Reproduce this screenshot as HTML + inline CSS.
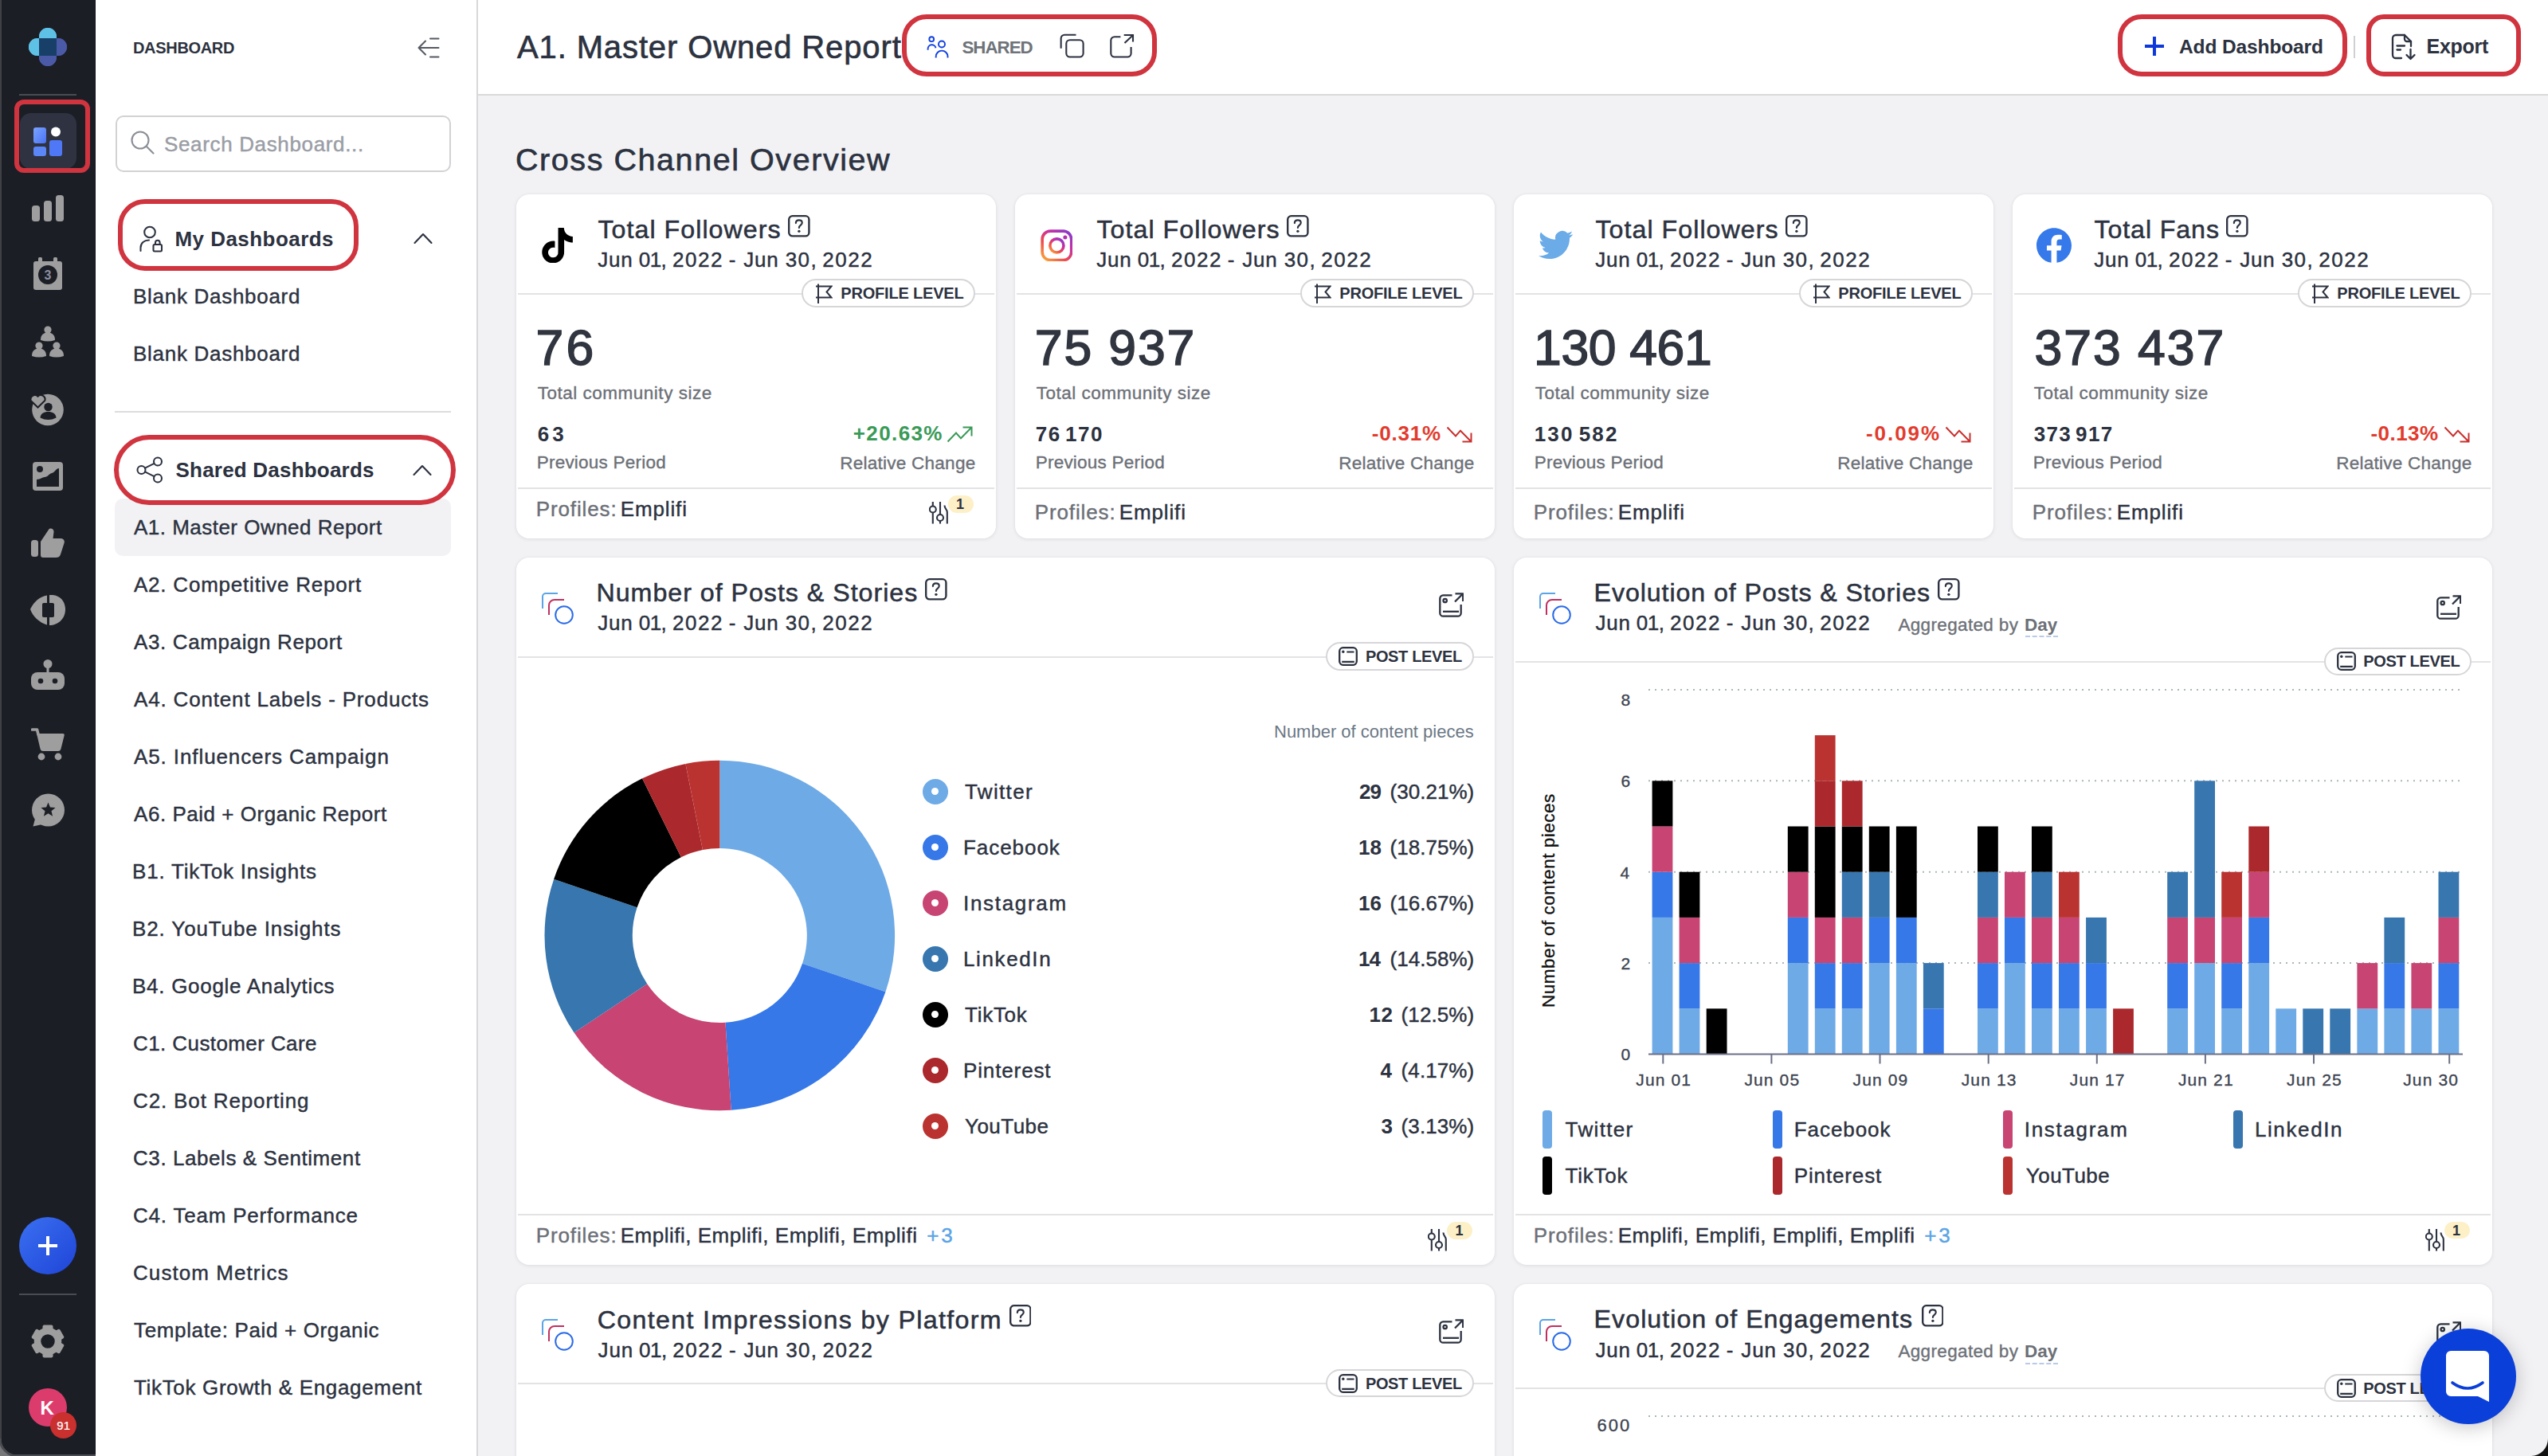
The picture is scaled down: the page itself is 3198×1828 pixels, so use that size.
<!DOCTYPE html>
<html lang="en"><head><meta charset="utf-8"><title>A1. Master Owned Report</title><style>
html,body{margin:0;padding:0}
body{width:3198px;height:1828px;overflow:hidden;background:#f2f2f5;position:relative;font-family:"Liberation Sans",sans-serif;}
.t{position:absolute;white-space:pre;line-height:1;}
.card{background:#fff;border-radius:16px;box-shadow:0 1px 5px rgba(30,35,50,.09),0 0 2px rgba(30,35,50,.05);}
.hl{position:absolute;height:2px;background:#e3e3e6;}
.pill{position:absolute;box-sizing:border-box;border:2px solid #d6d6d9;border-radius:20px;background:#fff;}
</style></head>
<body>
<div style="position:absolute;left:0.0px;top:0.0px;width:120.0px;height:1828.0px;background:#1c1e26;"></div>
<div style="position:absolute;left:0.0px;top:0.0px;width:2.0px;height:1828.0px;background:#3e4046;"></div>
<div style="position:absolute;left:119.0px;top:0.0px;width:1.0px;height:1828.0px;background:#11141c;"></div>
<svg style="position:absolute;left:36.0px;top:35.0px" width="48.0" height="48.0" viewBox="0 0 48 48" >
<circle cx="24" cy="11" r="11" fill="#5ec2e6"/>
<circle cx="11" cy="24" r="11" fill="#5ec2e6"/>
<circle cx="37" cy="24" r="11" fill="#4b5aa6"/>
<circle cx="24" cy="37" r="11" fill="#4b5aa6"/>
<rect x="13" y="13" width="22" height="22" fill="#173f68"/>
<path d="M13 13H35V11A11 11 0 0 0 13 11Z" fill="#5ec2e6"/>
<path d="M13 35H35V37A11 11 0 0 1 13 37Z" fill="#4b5aa6"/>
<path d="M13 13V35H11A11 11 0 0 1 11 13Z" fill="#5ec2e6"/>
<path d="M35 13V35H37A11 11 0 0 0 37 13Z" fill="#4b5aa6"/>
<rect x="13" y="13" width="22" height="22" fill="#173f68"/>
<path d="M13 35L20 28V35Z" fill="#4b5aa6" opacity=".0"/>
</svg>
<div style="position:absolute;left:24.0px;top:118.0px;width:72.0px;height:2.0px;background:#4a4c54;"></div>
<div style="position:absolute;left:25.0px;top:142.0px;width:71.0px;height:70.0px;background:#2f3341;border-radius:14px;"></div>
<svg style="position:absolute;left:40.0px;top:158.0px" width="40.0" height="40.0" viewBox="0 0 40 40" >
<defs><linearGradient id="gA" x1="0" y1="0" x2="1" y2="1"><stop offset="0" stop-color="#7aa5ff"/><stop offset="1" stop-color="#4a72f5"/></linearGradient></defs>
<rect x="2" y="2" width="16" height="20" rx="3" fill="url(#gA)"/>
<rect x="2" y="26" width="16" height="12" rx="3" fill="#5b86f8"/>
<rect x="22" y="18" width="16" height="20" rx="3" fill="#4f78f6"/>
<circle cx="30" cy="7.5" r="6" fill="#fff"/>
</svg>
<div style="position:absolute;left:18.0px;top:125.0px;width:95.0px;height:92.0px;border:6px solid #d0343f;border-radius:12px;box-sizing:border-box;"></div>
<svg style="position:absolute;left:40.0px;top:245.0px" width="40.0" height="34.0" viewBox="0 0 40 34" >
<rect x="0" y="13" width="10" height="20" rx="3.5" fill="#9e9e9e"/>
<rect x="15" y="7" width="10" height="26" rx="3.5" fill="#9e9e9e"/>
<rect x="30" y="0" width="10" height="33" rx="3.5" fill="#9e9e9e"/></svg>
<svg style="position:absolute;left:42.0px;top:323.0px" width="36.0" height="41.0" viewBox="0 0 36 41" >
<rect x="0" y="5" width="36" height="36" rx="3" fill="#9e9e9e"/>
<rect x="6" y="0" width="5" height="8" rx="1.5" fill="#9e9e9e"/><rect x="25" y="0" width="5" height="8" rx="1.5" fill="#9e9e9e"/>
<circle cx="18" cy="22" r="12" fill="#1c1e26"/>
<text x="18" y="28" font-family="Liberation Sans, sans-serif" font-weight="700" font-size="16" fill="#8d8fa0" text-anchor="middle">3</text></svg>
<svg style="position:absolute;left:38.0px;top:408.0px" width="44.0" height="44.0" viewBox="0 0 44 44" ><circle cx="22" cy="6" r="4.6" fill="#9e9e9e"/><path d="M13 19C13 12 17 9.5 22 9.5C27 9.5 31 12 31 19Q22 22 13 19Z" fill="#9e9e9e"/><circle cx="11" cy="26" r="4.6" fill="#9e9e9e"/><path d="M2 39C2 32 6 29.5 11 29.5C16 29.5 20 32 20 39Q11 42 2 39Z" fill="#9e9e9e"/><circle cx="33" cy="26" r="4.6" fill="#9e9e9e"/><path d="M24 39C24 32 28 29.5 33 29.5C38 29.5 42 32 42 39Q33 42 24 39Z" fill="#9e9e9e"/></svg>
<svg style="position:absolute;left:38.0px;top:492.0px" width="44.0" height="44.0" viewBox="0 0 44 44" >
<circle cx="22" cy="22.500" r="19.800" fill="#9e9e9e"/>
<circle cx="22.500" cy="19" r="5.200" fill="#1c1e26"/>
<path d="M12.500 32.500C13 27 17 25 22.500 25C28 25 32 27 32.500 32.500Q22.500 37.500 12.500 32.500Z" fill="#1c1e26"/>
<path d="M9.500 19.500L0.700 11A5.300 5.300 0 0 1 9.500 5.700A5.300 5.300 0 0 1 18.300 11Z" fill="#9e9e9e" stroke="#1c1e26" stroke-width="2"/>
</svg>
<svg style="position:absolute;left:41.0px;top:580.0px" width="38.0" height="36.0" viewBox="0 0 38 36" >
<rect x="0" y="0" width="38" height="36" rx="4" fill="#9e9e9e"/>
<circle cx="9" cy="9" r="4" fill="#1c1e26"/>
<path d="M5 31V22C10 22 12 19 15 19C19 19 20 15 24 14C28 13 29 8 33 8V31Z" fill="#1c1e26"/></svg>
<svg style="position:absolute;left:39.0px;top:663.0px" width="42.0" height="38.0" viewBox="0 0 42 38" >
<rect x="0" y="15" width="9" height="21" rx="3.5" fill="#9e9e9e"/>
<path d="M12 17L22 2C24 -1 29 1 28.5 5L27.5 13H37C41 13 42.5 16 41.5 19L37 33C36 36 34 37 31 37H15C13 37 12 36 12 34Z" fill="#9e9e9e"/></svg>
<svg style="position:absolute;left:38.0px;top:747.0px" width="44.0" height="38.0" viewBox="0 0 44 38" >
<path d="M21 0.5C12 2 4 9 0 18C3 27 12 35 21 37.5V28H17C15.5 28 15 27 15 26V12C15 11 15.5 10 17 10H21Z" fill="#9e9e9e"/>
<path d="M24 0C36 -1 44 7 44 18C44 30 35 38 24 38V28H28C29.5 28 30 27 30 26V12C30 11 29.5 10 28 10H24Z" fill="#9e9e9e"/></svg>
<svg style="position:absolute;left:39.0px;top:828.0px" width="42.0" height="39.0" viewBox="0 0 42 39" >
<circle cx="21" cy="5.5" r="5.5" fill="#9e9e9e"/><rect x="19.5" y="8" width="3" height="10" fill="#9e9e9e"/>
<rect x="0" y="16" width="42" height="22" rx="8" fill="#9e9e9e"/>
<circle cx="12" cy="27" r="3.3" fill="#1c1e26"/><circle cx="30" cy="27" r="3.3" fill="#1c1e26"/></svg>
<svg style="position:absolute;left:39.0px;top:914.0px" width="42.0" height="41.0" viewBox="0 0 42 41" >
<path d="M1.5 2H7.5L9 8" fill="none" stroke="#9e9e9e" stroke-width="3.6" stroke-linecap="round" stroke-linejoin="round"/>
<path d="M7 7H40C41.5 7 42 8 41.7 9.3L37.5 26C37 28 36 29 34 29H15C13 29 12 28 11.5 26Z" fill="#9e9e9e"/>
<circle cx="13" cy="36" r="4.4" fill="#9e9e9e"/><circle cx="34" cy="36" r="4.4" fill="#9e9e9e"/></svg>
<svg style="position:absolute;left:39.0px;top:996.0px" width="42.0" height="43.0" viewBox="0 0 42 43" >
<circle cx="21.5" cy="21" r="20.5" fill="#9e9e9e"/>
<path d="M5 32L2.5 41.5L14 39Z" fill="#9e9e9e"/>
<path d="M21.5 11.500L23.968 17.603L30.535 18.064L25.494 22.297L27.084 28.686L21.500 25.200L15.916 28.686L17.506 22.297L12.465 18.064L19.032 17.603Z" fill="#1c1e26"/></svg>
<div style="position:absolute;left:24px;top:1528px;width:72px;height:72px;border-radius:50%;background:linear-gradient(135deg,#3a70f0,#1f44d8);"></div>
<div style="position:absolute;left:48.0px;top:1562.0px;width:24.0px;height:4.0px;background:#fff;"></div>
<div style="position:absolute;left:58.0px;top:1552.0px;width:4.0px;height:24.0px;background:#fff;"></div>
<div style="position:absolute;left:24.0px;top:1624.0px;width:72.0px;height:2.0px;background:#4a4c54;"></div>
<svg style="position:absolute;left:39.0px;top:1663.0px" width="42.0" height="42.0" viewBox="-21 -21 42 42" ><rect x="-6.5" y="-20.5" width="13" height="10" rx="2" transform="rotate(0)" fill="#9e9e9e"/><rect x="-6.5" y="-20.5" width="13" height="10" rx="2" transform="rotate(60)" fill="#9e9e9e"/><rect x="-6.5" y="-20.5" width="13" height="10" rx="2" transform="rotate(120)" fill="#9e9e9e"/><rect x="-6.5" y="-20.5" width="13" height="10" rx="2" transform="rotate(180)" fill="#9e9e9e"/><rect x="-6.5" y="-20.5" width="13" height="10" rx="2" transform="rotate(240)" fill="#9e9e9e"/><rect x="-6.5" y="-20.5" width="13" height="10" rx="2" transform="rotate(300)" fill="#9e9e9e"/><circle r="13" fill="none" stroke="#9e9e9e" stroke-width="8.5"/></svg>
<div style="position:absolute;left:36.0px;top:1743.0px;width:48.0px;height:48.0px;border-radius:50%;background:#dc3c6c;"></div>
<span class="t" style="left:50.5px;top:1756.2px;font-size:24px;color:#fff;font-weight:700;">K</span>
<div style="position:absolute;left:63.0px;top:1773.0px;width:33.0px;height:33.0px;border-radius:50%;background:#c9302e;"></div>
<span class="t" style="left:71.3px;top:1782.3px;font-size:15px;color:#fff;-webkit-text-stroke:0.24px;">91</span>
<div style="position:absolute;left:0.0px;top:1826.0px;width:120.0px;height:2.0px;background:#4b4d53;"></div>
<svg style="position:absolute;left:0;top:1806px" width="22" height="22" viewBox="0 0 22 22"><path d="M0 0V22H22A22 22 0 0 1 0 0Z" fill="#77787a"/><path d="M0 0A22 22 0 0 0 22 22" fill="none" stroke="#4b4d53" stroke-width="3"/></svg>
<div style="position:absolute;left:120.0px;top:0.0px;width:478.0px;height:1828.0px;background:#fff;"></div>
<div style="position:absolute;left:598.0px;top:0.0px;width:2.0px;height:1828.0px;background:#d8d8db;"></div>
<span class="t" style="left:167.0px;top:50.4px;font-size:20px;color:#2c3240;font-weight:700;letter-spacing:-0.32px;">DASHBOARD</span>
<svg style="position:absolute;left:523.0px;top:46.0px" width="30.0" height="28.0" viewBox="0 0 30 28" ><g fill="none" stroke="#555a63" stroke-width="2.05" stroke-linecap="round" stroke-linejoin="round">
<path d="M17 2.5H27.5M2.5 14H27.5M17 25.5H27.5M11 5.5L2.5 14L11 22.5"/></g></svg>
<div style="position:absolute;left:145.0px;top:145.0px;width:421.0px;height:70.5px;box-sizing:border-box;border:2px solid #d2d2d5;border-radius:10px;background:#fff;"></div>
<svg style="position:absolute;left:163.0px;top:163.0px" width="32.0" height="32.0" viewBox="0 0 32 32" ><g fill="none" stroke="#8a8e96" stroke-width="2.1" stroke-linecap="round"><circle cx="13" cy="13" r="10.5"/><path d="M21 21L29.5 29.5"/></g></svg>
<span class="t" style="left:206.0px;top:167.5px;font-size:26px;color:#9a9da5;-webkit-text-stroke:0.42px;letter-spacing:0.65px;">Search Dashboard...</span>
<div style="position:absolute;left:148.0px;top:250.0px;width:302.2px;height:90.0px;border:6px solid #d0343f;border-radius:34px;box-sizing:border-box;"></div>
<svg style="position:absolute;left:175.0px;top:283.0px" width="30.0" height="34.0" viewBox="0 0 30 34" ><g fill="none" stroke="#2c3240" stroke-width="2.05" stroke-linecap="round" stroke-linejoin="round">
<circle cx="13" cy="8.5" r="6.8"/><path d="M1.5 32V28C1.5 22 6 18.5 12 18.5"/>
<rect x="17.5" y="24" width="10.5" height="8.5" rx="1.5"/><path d="M20 24V21.5A2.8 2.8 0 0 1 25.6 21.5V24"/></g></svg>
<span class="t" style="left:219.5px;top:287.0px;font-size:26px;color:#2c3240;font-weight:700;letter-spacing:0.45px;">My Dashboards</span>
<svg style="position:absolute;left:518.0px;top:290.0px" width="26.0" height="18.0" viewBox="0 0 26 18" ><path d="M2.5 15L13 4L23.5 15" fill="none" stroke="#2c3240" stroke-width="2.1" stroke-linecap="round" stroke-linejoin="round"/></svg>
<span class="t" style="left:167.0px;top:359.0px;font-size:26px;color:#2c3240;-webkit-text-stroke:0.42px;letter-spacing:0.71px;">Blank Dashboard</span>
<span class="t" style="left:167.0px;top:431.3px;font-size:26px;color:#2c3240;-webkit-text-stroke:0.42px;letter-spacing:0.71px;">Blank Dashboard</span>
<div style="position:absolute;left:144.0px;top:516.0px;width:422.0px;height:2.0px;background:#dcdcdf;"></div>
<div style="position:absolute;left:144.0px;top:626.0px;width:422.0px;height:71.6px;background:#f2f2f5;border-radius:10px;"></div>
<div style="position:absolute;left:149.0px;top:552.0px;width:417.0px;height:76.0px;background:#fff;border-radius:38px;"></div>
<div style="position:absolute;left:143.0px;top:546.0px;width:429.0px;height:88.0px;border:6px solid #d0343f;border-radius:44px;box-sizing:border-box;"></div>
<svg style="position:absolute;left:171.0px;top:573.0px" width="34.0" height="34.0" viewBox="0 0 34 34" ><g fill="none" stroke="#2c3240" stroke-width="2.05" stroke-linecap="round">
<circle cx="6.5" cy="17" r="5"/><circle cx="27" cy="6.5" r="5"/><circle cx="27" cy="27.5" r="5"/><path d="M11 14.7L22.5 8.8M11 19.3L22.5 25.2"/></g></svg>
<span class="t" style="left:220.5px;top:577.4px;font-size:26px;color:#2c3240;font-weight:700;letter-spacing:0.21px;">Shared Dashboards</span>
<svg style="position:absolute;left:517.0px;top:581.0px" width="26.0" height="18.0" viewBox="0 0 26 18" ><path d="M2.5 15L13 4L23.5 15" fill="none" stroke="#2c3240" stroke-width="2.1" stroke-linecap="round" stroke-linejoin="round"/></svg>
<span class="t" style="left:168.0px;top:649.0px;font-size:26px;color:#2c3240;-webkit-text-stroke:0.42px;letter-spacing:0.48px;">A1. Master Owned Report</span>
<span class="t" style="left:168.0px;top:721.0px;font-size:26px;color:#2c3240;-webkit-text-stroke:0.42px;letter-spacing:0.78px;">A2. Competitive Report</span>
<span class="t" style="left:168.0px;top:793.0px;font-size:26px;color:#2c3240;-webkit-text-stroke:0.42px;letter-spacing:0.62px;">A3. Campaign Report</span>
<span class="t" style="left:168.0px;top:865.0px;font-size:26px;color:#2c3240;-webkit-text-stroke:0.42px;letter-spacing:0.83px;">A4. Content Labels - Products</span>
<span class="t" style="left:168.0px;top:937.0px;font-size:26px;color:#2c3240;-webkit-text-stroke:0.42px;letter-spacing:0.90px;">A5. Influencers Campaign</span>
<span class="t" style="left:168.0px;top:1009.0px;font-size:26px;color:#2c3240;-webkit-text-stroke:0.42px;letter-spacing:0.54px;">A6. Paid + Organic Report</span>
<span class="t" style="left:166.0px;top:1081.0px;font-size:26px;color:#2c3240;-webkit-text-stroke:0.42px;letter-spacing:0.79px;">B1. TikTok Insights</span>
<span class="t" style="left:166.0px;top:1153.0px;font-size:26px;color:#2c3240;-webkit-text-stroke:0.42px;letter-spacing:0.88px;">B2. YouTube Insights</span>
<span class="t" style="left:166.0px;top:1225.0px;font-size:26px;color:#2c3240;-webkit-text-stroke:0.42px;letter-spacing:0.72px;">B4. Google Analytics</span>
<span class="t" style="left:167.0px;top:1297.0px;font-size:26px;color:#2c3240;-webkit-text-stroke:0.42px;letter-spacing:0.41px;">C1. Customer Care</span>
<span class="t" style="left:167.0px;top:1369.0px;font-size:26px;color:#2c3240;-webkit-text-stroke:0.42px;letter-spacing:0.86px;">C2. Bot Reporting</span>
<span class="t" style="left:167.0px;top:1441.0px;font-size:26px;color:#2c3240;-webkit-text-stroke:0.42px;letter-spacing:0.57px;">C3. Labels &amp; Sentiment</span>
<span class="t" style="left:167.0px;top:1513.0px;font-size:26px;color:#2c3240;-webkit-text-stroke:0.42px;letter-spacing:0.80px;">C4. Team Performance</span>
<span class="t" style="left:167.0px;top:1585.0px;font-size:26px;color:#2c3240;-webkit-text-stroke:0.42px;letter-spacing:1.07px;">Custom Metrics</span>
<span class="t" style="left:168.0px;top:1657.0px;font-size:26px;color:#2c3240;-webkit-text-stroke:0.42px;letter-spacing:0.65px;">Template: Paid + Organic</span>
<span class="t" style="left:168.0px;top:1729.0px;font-size:26px;color:#2c3240;-webkit-text-stroke:0.42px;letter-spacing:0.67px;">TikTok Growth &amp; Engagement</span>
<div style="position:absolute;left:600.0px;top:0.0px;width:2598.0px;height:118.0px;background:#fff;"></div>
<div style="position:absolute;left:600.0px;top:118.0px;width:2598.0px;height:2.0px;background:#d9d9dc;"></div>
<span class="t" style="left:649.0px;top:39.1px;font-size:40px;color:#2c3240;-webkit-text-stroke:0.64px;letter-spacing:0.88px;">A1. Master Owned Report</span>
<div style="position:absolute;left:1132.4px;top:18.0px;width:319.3px;height:77.9px;border:6.3px solid #d0343f;border-radius:31px;box-sizing:border-box;"></div>
<svg style="position:absolute;left:1160.0px;top:40.0px" width="36.0" height="36.0" viewBox="0 0 36 36" ><g fill="none" stroke="#1040e0" stroke-width="1.900" stroke-linecap="butt">
<circle cx="9.200" cy="9.200" r="2.900"/><path d="M4.600 22.700V21.200A5 5 0 0 1 14.500 20.300"/>
<circle cx="22" cy="15.500" r="4"/><path d="M14.700 32.600V31A7.400 7.400 0 0 1 29.500 31V32.600"/></g></svg>
<span class="t" style="left:1207.5px;top:48.6px;font-size:22.3px;color:#6e7379;font-weight:700;letter-spacing:-1.01px;">SHARED</span>
<svg style="position:absolute;left:1329.0px;top:41.0px" width="34.0" height="34.0" viewBox="0 0 34 34" ><g fill="none" stroke="#2c3240" stroke-width="2.100" stroke-linecap="butt" stroke-linejoin="round">
<rect x="9.300" y="9.200" width="21.300" height="21.300" rx="4.500"/><path d="M2.650 19.750V7.200A4.500 4.500 0 0 1 7.150 2.700H21.500"/></g></svg>
<svg style="position:absolute;left:1391.0px;top:41.0px" width="34.0" height="34.0" viewBox="0 0 34 34" ><g fill="none" stroke="#2c3240" stroke-width="2.100" stroke-linecap="butt" stroke-linejoin="miter">
<path d="M15.400 5.200H7.800A4.500 4.500 0 0 0 3.300 9.700V26A4.500 4.500 0 0 0 7.800 30.500H24.100A4.500 4.500 0 0 0 28.600 26V17.900"/><path d="M20.500 13.100L30.600 3.400M19.700 3H31V11.600"/></g></svg>
<div style="position:absolute;left:2658.2px;top:17.8px;width:287.8px;height:78.2px;border:6.3px solid #d0343f;border-radius:30px;box-sizing:border-box;"></div>
<div style="position:absolute;left:2692.0px;top:56.1px;width:24.0px;height:3.9px;background:#0e38d9;"></div>
<div style="position:absolute;left:2702.1px;top:46.2px;width:3.9px;height:23.8px;background:#0e38d9;"></div>
<span class="t" style="left:2735.0px;top:46.6px;font-size:24.5px;color:#2c3240;font-weight:700;letter-spacing:-0.12px;">Add Dashboard</span>
<div style="position:absolute;left:2954.0px;top:45.0px;width:2.0px;height:28.0px;background:#d0d0d3;"></div>
<div style="position:absolute;left:2970.0px;top:17.8px;width:194.2px;height:78.2px;border:6.3px solid #d0343f;border-radius:22px;box-sizing:border-box;"></div>
<svg style="position:absolute;left:3001.0px;top:42.0px" width="32.0" height="34.0" viewBox="0 0 32 34" ><g fill="none" stroke="#2c3240" stroke-width="2.3" stroke-linecap="round" stroke-linejoin="round">
<path d="M13 31H6A4 4 0 0 1 2 27V6A4 4 0 0 1 6 2H17L25 10V16"/><path d="M17 2V7A3 3 0 0 0 20 10H25"/><path d="M7.5 15.500H17M7.500 20.5H12"/>
<path d="M24.500 20V32M19.500 27L24.500 32L29.500 27"/></g></svg>
<span class="t" style="left:3045.6px;top:46.1px;font-size:25px;color:#2c3240;font-weight:700;letter-spacing:-0.29px;">Export</span>
<span class="t" style="left:647.0px;top:180.6px;font-size:39.5px;color:#2c3240;-webkit-text-stroke:0.63px;letter-spacing:1.56px;">Cross Channel Overview</span>
<div class="card" style="position:absolute;left:648.0px;top:244.0px;width:602.0px;height:432.0px;"></div>
<svg style="position:absolute;left:680.4px;top:286.0px" width="39.2" height="44.4" viewBox="1.5 0 21 24" ><path d="M12.525.02c1.31-.02 2.61-.01 3.91-.02.08 1.530.630 3.090 1.750 4.170 1.120 1.110 2.700 1.620 4.240 1.790v4.030c-1.440-.050-2.890-.350-4.200-.970-.570-.260-1.100-.590-1.620-.930-.010 2.920.010 5.840-.020 8.750-.080 1.400-.540 2.790-1.350 3.940-1.310 1.920-3.580 3.170-5.910 3.210-1.430.080-2.860-.310-4.080-1.030-2.020-1.190-3.440-3.370-3.650-5.710-.020-.5-.030-1-.010-1.490.180-1.900 1.120-3.720 2.580-4.960 1.660-1.440 3.980-2.130 6.150-1.720.020 1.480-.040 2.960-.040 4.440-.990-.320-2.150-.230-3.020.370-.630.410-1.110 1.040-1.360 1.750-.210.510-.150 1.070-.140 1.610.240 1.640 1.820 3.020 3.500 2.870 1.120-.010 2.190-.660 2.770-1.610.190-.330.400-.670.410-1.060.100-1.790.060-3.570.070-5.360.010-4.030-.010-8.050.020-12.070z" fill="#000"/></svg>
<span class="t" style="left:750.5px;top:271.6px;font-size:32.2px;color:#2c3240;-webkit-text-stroke:0.52px;letter-spacing:1.03px;">Total Followers</span>
<svg style="position:absolute;left:989.0px;top:270.2px" width="27.6" height="27.6" viewBox="0 0 28 28" ><rect x="1.2" y="1.2" width="25.6" height="25.6" rx="4.5" fill="none" stroke="#2c3240" stroke-width="2.4"/>
<path d="M10 10.200C10 7.800 11.800 6.500 14 6.500C16.300 6.500 18 7.900 18 9.900C18 12.800 14.100 12.800 14.100 16.200" fill="none" stroke="#2c3240" stroke-width="2.2" stroke-linecap="round"/>
<circle cx="14.100" cy="20.600" r="1.700" fill="#2c3240"/></svg>
<span class="t" style="left:750.3px;top:313.2px;font-size:26px;color:#2c3240;-webkit-text-stroke:0.42px"><i style="display:inline-block;font-style:normal;width:51.4px;letter-spacing:0.8px">Jun </i><i style="display:inline-block;font-style:normal;width:42.2px;letter-spacing:-0.5px">01, </i><i style="display:inline-block;font-style:normal;width:70.8px;letter-spacing:1.55px">2022 </i><i style="display:inline-block;font-style:normal;width:18.6px;letter-spacing:0px">- </i><i style="display:inline-block;font-style:normal;width:52.6px;letter-spacing:0.8px">Jun </i><i style="display:inline-block;font-style:normal;width:46.4px;letter-spacing:1.3px">30, </i><i style="display:inline-block;font-style:normal;width:64px;letter-spacing:1.55px">2022</i></span>
<div class="hl" style="left:650.0px;top:368.0px;width:598.0px"></div>
<div class="pill" style="position:absolute;left:1006.3px;top:350.4px;width:217.8px;height:35.2px;"></div>
<svg style="position:absolute;left:1022.5px;top:355.5px" width="22.0" height="26.0" viewBox="0 0 22 26" ><g fill="none" stroke="#2c3240" stroke-width="2" stroke-linejoin="miter">
<path d="M4 0.500V25"/><path d="M1 3.500H20.500L14.500 10.500L20.500 17.500H1"/></g></svg>
<span class="t" style="left:1055.3px;top:358.4px;font-size:20px;color:#2c3240;font-weight:700;letter-spacing:-0.19px;">PROFILE LEVEL</span>
<span class="t" style="left:672.5px;top:405.3px;font-size:62.5px;color:#30353f;letter-spacing:3.24px;-webkit-text-stroke:1.5px;">76</span>
<span class="t" style="left:674.7px;top:482.6px;font-size:22.5px;color:#6c7077;-webkit-text-stroke:0.36px;letter-spacing:0.51px;">Total community size</span>
<span class="t" style="left:674.7px;top:532.4px;font-size:26px;color:#2c3240;font-weight:700;letter-spacing:4.14px;word-spacing:-3.5px;">63</span>
<span class="t" style="left:673.7px;top:569.5px;font-size:22.5px;color:#6c7077;-webkit-text-stroke:0.36px;letter-spacing:0.23px;">Previous Period</span>
<span class="t" style="left:1070.8px;top:530.8px;font-size:26px;color:#3a9a57;font-weight:700;letter-spacing:1.38px;">+20.63%</span>
<svg style="position:absolute;left:1188.0px;top:534.0px" width="34.0" height="22.0" viewBox="0 0 34 22" ><path d="M1.500 20.500L12 9.500L18 16.300L31.500 2.500M20.500 2.500H31.500V13.500" fill="none" stroke="#3a9a57" stroke-width="2"/></svg>
<span class="t" style="left:1054.3px;top:571.0px;font-size:22.5px;color:#6c7077;-webkit-text-stroke:0.36px;letter-spacing:0.25px;">Relative Change</span>
<div class="hl" style="left:650.0px;top:612.0px;width:598.0px"></div>
<span class="t" style="left:672.7px;top:625.6px;font-size:26px;color:#6c7077;-webkit-text-stroke:0.42px;letter-spacing:0.89px;">Profiles:</span>
<span class="t" style="left:778.7px;top:625.6px;font-size:26px;color:#2c3240;-webkit-text-stroke:0.42px;letter-spacing:0.88px;">Emplifi</span>
<svg style="position:absolute;left:1166.0px;top:629.2px" width="28.0" height="30.0" viewBox="0 0 28 30" ><g fill="none" stroke="#2c3240" stroke-width="2.100">
<path d="M4.800 1V6.500M4.800 14.500V28.500"/><circle cx="4.800" cy="10.500" r="4"/>
<path d="M14 1V17M14 25V28.500"/><circle cx="14" cy="21" r="4"/>
<path d="M22.800 28.500V14C22.800 10 19.500 10 19.500 5.500"/></g></svg>
<div style="position:absolute;left:1190.0px;top:622.0px;width:32.0px;height:21.6px;background:#fdf0c6;border-radius:11px;"></div>
<span class="t" style="left:1200.0px;top:624.2px;font-size:18px;color:#2c3240;font-weight:700;">1</span>
<div class="card" style="position:absolute;left:1274.0px;top:244.0px;width:602.0px;height:432.0px;"></div>
<svg style="position:absolute;left:1305.6px;top:287.6px" width="40.8" height="40.8" viewBox="0 0 42 42" ><defs><linearGradient id="ig" x1="0.1" y1="1" x2="0.9" y2="0"><stop offset="0" stop-color="#f9a13a"/><stop offset=".35" stop-color="#ee4a4e"/><stop offset=".7" stop-color="#c22fa6"/><stop offset="1" stop-color="#8a3ac8"/></linearGradient></defs>
<rect x="2.2" y="2.2" width="37.600" height="37.600" rx="10.500" fill="none" stroke="url(#ig)" stroke-width="3.700"/>
<circle cx="21" cy="21" r="8.800" fill="none" stroke="url(#ig)" stroke-width="3.700"/><circle cx="31.800" cy="10.200" r="2.600" fill="#b030b0"/></svg>
<span class="t" style="left:1376.5px;top:271.6px;font-size:32.2px;color:#2c3240;-webkit-text-stroke:0.52px;letter-spacing:1.03px;">Total Followers</span>
<svg style="position:absolute;left:1615.0px;top:270.2px" width="27.6" height="27.6" viewBox="0 0 28 28" ><rect x="1.2" y="1.2" width="25.6" height="25.6" rx="4.5" fill="none" stroke="#2c3240" stroke-width="2.4"/>
<path d="M10 10.200C10 7.800 11.800 6.500 14 6.500C16.300 6.500 18 7.900 18 9.900C18 12.800 14.100 12.800 14.100 16.200" fill="none" stroke="#2c3240" stroke-width="2.2" stroke-linecap="round"/>
<circle cx="14.100" cy="20.600" r="1.700" fill="#2c3240"/></svg>
<span class="t" style="left:1376.3px;top:313.2px;font-size:26px;color:#2c3240;-webkit-text-stroke:0.42px"><i style="display:inline-block;font-style:normal;width:51.4px;letter-spacing:0.8px">Jun </i><i style="display:inline-block;font-style:normal;width:42.2px;letter-spacing:-0.5px">01, </i><i style="display:inline-block;font-style:normal;width:70.8px;letter-spacing:1.55px">2022 </i><i style="display:inline-block;font-style:normal;width:18.6px;letter-spacing:0px">- </i><i style="display:inline-block;font-style:normal;width:52.6px;letter-spacing:0.8px">Jun </i><i style="display:inline-block;font-style:normal;width:46.4px;letter-spacing:1.3px">30, </i><i style="display:inline-block;font-style:normal;width:64px;letter-spacing:1.55px">2022</i></span>
<div class="hl" style="left:1276.0px;top:368.0px;width:598.0px"></div>
<div class="pill" style="position:absolute;left:1632.3px;top:350.4px;width:217.8px;height:35.2px;"></div>
<svg style="position:absolute;left:1648.5px;top:355.5px" width="22.0" height="26.0" viewBox="0 0 22 26" ><g fill="none" stroke="#2c3240" stroke-width="2" stroke-linejoin="miter">
<path d="M4 0.500V25"/><path d="M1 3.500H20.500L14.500 10.500L20.500 17.500H1"/></g></svg>
<span class="t" style="left:1681.3px;top:358.4px;font-size:20px;color:#2c3240;font-weight:700;letter-spacing:-0.19px;">PROFILE LEVEL</span>
<span class="t" style="left:1298.8px;top:405.3px;font-size:62.5px;color:#30353f;letter-spacing:1.88px;-webkit-text-stroke:1.5px;">75 937</span>
<span class="t" style="left:1300.7px;top:482.6px;font-size:22.5px;color:#6c7077;-webkit-text-stroke:0.36px;letter-spacing:0.51px;">Total community size</span>
<span class="t" style="left:1299.7px;top:532.4px;font-size:26px;color:#2c3240;font-weight:700;letter-spacing:1.53px;word-spacing:-3.5px;">76 170</span>
<span class="t" style="left:1299.7px;top:569.5px;font-size:22.5px;color:#6c7077;-webkit-text-stroke:0.36px;letter-spacing:0.23px;">Previous Period</span>
<span class="t" style="left:1721.7px;top:530.8px;font-size:26px;color:#e23b2e;font-weight:700;letter-spacing:0.81px;">-0.31%</span>
<svg style="position:absolute;left:1814.5px;top:535.0px" width="34.0" height="22.0" viewBox="0 0 34 22" ><path d="M1.500 1.500L12 12.500L18 5.700L31.500 19.500M20.500 19.500H31.500V8.500" fill="none" stroke="#c9302e" stroke-width="2"/></svg>
<span class="t" style="left:1680.3px;top:571.0px;font-size:22.5px;color:#6c7077;-webkit-text-stroke:0.36px;letter-spacing:0.25px;">Relative Change</span>
<div class="hl" style="left:1276.0px;top:612.0px;width:598.0px"></div>
<span class="t" style="left:1298.7px;top:629.7px;font-size:26px;color:#6c7077;-webkit-text-stroke:0.42px;letter-spacing:0.89px;">Profiles:</span>
<span class="t" style="left:1404.7px;top:629.7px;font-size:26px;color:#2c3240;-webkit-text-stroke:0.42px;letter-spacing:0.88px;">Emplifi</span>
<div class="card" style="position:absolute;left:1900.0px;top:244.0px;width:602.0px;height:432.0px;"></div>
<svg style="position:absolute;left:1930.5px;top:288.5px" width="43.4" height="37.5" viewBox="0 1.8 24 20.700" ><path d="M23.953 4.570a10 10 0 01-2.825.775 4.958 4.958 0 002.163-2.723c-.951.555-2.005.959-3.127 1.184a4.920 4.920 0 00-8.384 4.482C7.690 8.095 4.067 6.130 1.640 3.162a4.822 4.822 0 00-.666 2.475c0 1.710.870 3.213 2.188 4.096a4.904 4.904 0 01-2.228-.616v.060a4.923 4.923 0 003.946 4.827 4.996 4.996 0 01-2.212.085 4.936 4.936 0 004.604 3.417 9.867 9.867 0 01-6.102 2.105c-.390 0-.779-.023-1.170-.067a13.995 13.995 0 007.557 2.209c9.053 0 13.998-7.496 13.998-13.985 0-.210 0-.420-.015-.630A9.935 9.935 0 0024 4.590z" fill="#6aabe8"/></svg>
<span class="t" style="left:2002.5px;top:271.6px;font-size:32.2px;color:#2c3240;-webkit-text-stroke:0.52px;letter-spacing:1.03px;">Total Followers</span>
<svg style="position:absolute;left:2241.0px;top:270.2px" width="27.6" height="27.6" viewBox="0 0 28 28" ><rect x="1.2" y="1.2" width="25.6" height="25.6" rx="4.5" fill="none" stroke="#2c3240" stroke-width="2.4"/>
<path d="M10 10.200C10 7.800 11.800 6.500 14 6.500C16.300 6.500 18 7.900 18 9.900C18 12.800 14.100 12.800 14.100 16.200" fill="none" stroke="#2c3240" stroke-width="2.2" stroke-linecap="round"/>
<circle cx="14.100" cy="20.600" r="1.700" fill="#2c3240"/></svg>
<span class="t" style="left:2002.3px;top:313.2px;font-size:26px;color:#2c3240;-webkit-text-stroke:0.42px"><i style="display:inline-block;font-style:normal;width:51.4px;letter-spacing:0.8px">Jun </i><i style="display:inline-block;font-style:normal;width:42.2px;letter-spacing:-0.5px">01, </i><i style="display:inline-block;font-style:normal;width:70.8px;letter-spacing:1.55px">2022 </i><i style="display:inline-block;font-style:normal;width:18.6px;letter-spacing:0px">- </i><i style="display:inline-block;font-style:normal;width:52.6px;letter-spacing:0.8px">Jun </i><i style="display:inline-block;font-style:normal;width:46.4px;letter-spacing:1.3px">30, </i><i style="display:inline-block;font-style:normal;width:64px;letter-spacing:1.55px">2022</i></span>
<div class="hl" style="left:1902.0px;top:368.0px;width:598.0px"></div>
<div class="pill" style="position:absolute;left:2258.3px;top:350.4px;width:217.8px;height:35.2px;"></div>
<svg style="position:absolute;left:2274.5px;top:355.5px" width="22.0" height="26.0" viewBox="0 0 22 26" ><g fill="none" stroke="#2c3240" stroke-width="2" stroke-linejoin="miter">
<path d="M4 0.500V25"/><path d="M1 3.500H20.500L14.500 10.500L20.500 17.500H1"/></g></svg>
<span class="t" style="left:2307.3px;top:358.4px;font-size:20px;color:#2c3240;font-weight:700;letter-spacing:-0.19px;">PROFILE LEVEL</span>
<span class="t" style="left:1925.0px;top:405.3px;font-size:62.5px;color:#30353f;letter-spacing:-0.36px;-webkit-text-stroke:1.5px;">130 461</span>
<span class="t" style="left:1926.7px;top:482.6px;font-size:22.5px;color:#6c7077;-webkit-text-stroke:0.36px;letter-spacing:0.51px;">Total community size</span>
<span class="t" style="left:1925.7px;top:532.4px;font-size:26px;color:#2c3240;font-weight:700;letter-spacing:2.21px;word-spacing:-3.5px;">130 582</span>
<span class="t" style="left:1925.7px;top:569.5px;font-size:22.5px;color:#6c7077;-webkit-text-stroke:0.36px;letter-spacing:0.23px;">Previous Period</span>
<span class="t" style="left:2342.0px;top:530.8px;font-size:26px;color:#e23b2e;font-weight:700;letter-spacing:1.95px;">-0.09%</span>
<svg style="position:absolute;left:2440.5px;top:535.0px" width="34.0" height="22.0" viewBox="0 0 34 22" ><path d="M1.500 1.500L12 12.500L18 5.700L31.500 19.500M20.500 19.500H31.500V8.500" fill="none" stroke="#c9302e" stroke-width="2"/></svg>
<span class="t" style="left:2306.3px;top:571.0px;font-size:22.5px;color:#6c7077;-webkit-text-stroke:0.36px;letter-spacing:0.25px;">Relative Change</span>
<div class="hl" style="left:1902.0px;top:612.0px;width:598.0px"></div>
<span class="t" style="left:1924.7px;top:629.7px;font-size:26px;color:#6c7077;-webkit-text-stroke:0.42px;letter-spacing:0.89px;">Profiles:</span>
<span class="t" style="left:2030.7px;top:629.7px;font-size:26px;color:#2c3240;-webkit-text-stroke:0.42px;letter-spacing:0.88px;">Emplifi</span>
<div class="card" style="position:absolute;left:2526.0px;top:244.0px;width:602.0px;height:432.0px;"></div>
<svg style="position:absolute;left:2556.0px;top:286.0px" width="44.0" height="44.0" viewBox="0 0 24 24" ><circle cx="12" cy="12" r="11.500" fill="#fff"/><path d="M24 12.073c0-6.627-5.373-12-12-12s-12 5.373-12 12c0 5.990 4.388 10.954 10.125 11.854v-8.385H7.078v-3.470h3.047V9.430c0-3.007 1.792-4.669 4.533-4.669 1.312 0 2.686.235 2.686.235v2.953H15.830c-1.491 0-1.956.925-1.956 1.874v2.250h3.328l-.532 3.470h-2.796v8.385C19.612 23.027 24 18.062 24 12.073z" fill="#3579ea"/></svg>
<span class="t" style="left:2628.5px;top:271.6px;font-size:32.2px;color:#2c3240;-webkit-text-stroke:0.52px;letter-spacing:0.89px;">Total Fans</span>
<svg style="position:absolute;left:2794.4px;top:270.2px" width="27.6" height="27.6" viewBox="0 0 28 28" ><rect x="1.2" y="1.2" width="25.6" height="25.6" rx="4.5" fill="none" stroke="#2c3240" stroke-width="2.4"/>
<path d="M10 10.200C10 7.800 11.800 6.500 14 6.500C16.300 6.500 18 7.900 18 9.900C18 12.800 14.100 12.800 14.100 16.200" fill="none" stroke="#2c3240" stroke-width="2.2" stroke-linecap="round"/>
<circle cx="14.100" cy="20.600" r="1.700" fill="#2c3240"/></svg>
<span class="t" style="left:2628.3px;top:313.2px;font-size:26px;color:#2c3240;-webkit-text-stroke:0.42px"><i style="display:inline-block;font-style:normal;width:51.4px;letter-spacing:0.8px">Jun </i><i style="display:inline-block;font-style:normal;width:42.2px;letter-spacing:-0.5px">01, </i><i style="display:inline-block;font-style:normal;width:70.8px;letter-spacing:1.55px">2022 </i><i style="display:inline-block;font-style:normal;width:18.6px;letter-spacing:0px">- </i><i style="display:inline-block;font-style:normal;width:52.6px;letter-spacing:0.8px">Jun </i><i style="display:inline-block;font-style:normal;width:46.4px;letter-spacing:1.3px">30, </i><i style="display:inline-block;font-style:normal;width:64px;letter-spacing:1.55px">2022</i></span>
<div class="hl" style="left:2528.0px;top:368.0px;width:598.0px"></div>
<div class="pill" style="position:absolute;left:2884.3px;top:350.4px;width:217.8px;height:35.2px;"></div>
<svg style="position:absolute;left:2900.5px;top:355.5px" width="22.0" height="26.0" viewBox="0 0 22 26" ><g fill="none" stroke="#2c3240" stroke-width="2" stroke-linejoin="miter">
<path d="M4 0.500V25"/><path d="M1 3.500H20.500L14.500 10.500L20.500 17.500H1"/></g></svg>
<span class="t" style="left:2933.3px;top:358.4px;font-size:20px;color:#2c3240;font-weight:700;letter-spacing:-0.19px;">PROFILE LEVEL</span>
<span class="t" style="left:2553.5px;top:405.3px;font-size:62.5px;color:#30353f;letter-spacing:1.97px;-webkit-text-stroke:1.5px;">373 437</span>
<span class="t" style="left:2552.7px;top:482.6px;font-size:22.5px;color:#6c7077;-webkit-text-stroke:0.36px;letter-spacing:0.51px;">Total community size</span>
<span class="t" style="left:2552.7px;top:532.4px;font-size:26px;color:#2c3240;font-weight:700;letter-spacing:1.33px;word-spacing:-3.5px;">373 917</span>
<span class="t" style="left:2551.7px;top:569.5px;font-size:22.5px;color:#6c7077;-webkit-text-stroke:0.36px;letter-spacing:0.23px;">Previous Period</span>
<span class="t" style="left:2975.5px;top:530.8px;font-size:26px;color:#e23b2e;font-weight:700;letter-spacing:0.45px;">-0.13%</span>
<svg style="position:absolute;left:3066.5px;top:535.0px" width="34.0" height="22.0" viewBox="0 0 34 22" ><path d="M1.500 1.500L12 12.500L18 5.700L31.500 19.500M20.500 19.500H31.500V8.500" fill="none" stroke="#c9302e" stroke-width="2"/></svg>
<span class="t" style="left:2932.3px;top:571.0px;font-size:22.5px;color:#6c7077;-webkit-text-stroke:0.36px;letter-spacing:0.25px;">Relative Change</span>
<div class="hl" style="left:2528.0px;top:612.0px;width:598.0px"></div>
<span class="t" style="left:2550.7px;top:629.7px;font-size:26px;color:#6c7077;-webkit-text-stroke:0.42px;letter-spacing:0.89px;">Profiles:</span>
<span class="t" style="left:2656.7px;top:629.7px;font-size:26px;color:#2c3240;-webkit-text-stroke:0.42px;letter-spacing:0.88px;">Emplifi</span>
<div class="card" style="position:absolute;left:648.0px;top:700.0px;width:1228.0px;height:887.6px;"></div>
<svg style="position:absolute;left:678.0px;top:742.0px" width="44.0" height="44.0" viewBox="0 0 44 44" ><g fill="none" stroke-width="2">
<path d="M22 3H7A4 4 0 0 0 3 7V22" stroke="#5ba4e6"/><path d="M30 11H18A7 7 0 0 0 11 18V30" stroke="#c0305f"/>
<circle cx="30" cy="30" r="10.800" stroke="#2b6be8"/></g></svg>
<span class="t" style="left:748.5px;top:728.1px;font-size:32.2px;color:#2c3240;-webkit-text-stroke:0.52px;letter-spacing:0.98px;">Number of Posts &amp; Stories</span>
<svg style="position:absolute;left:1161.2px;top:726.3px" width="27.6" height="27.6" viewBox="0 0 28 28" ><rect x="1.2" y="1.2" width="25.6" height="25.6" rx="4.5" fill="none" stroke="#2c3240" stroke-width="2.4"/>
<path d="M10 10.200C10 7.800 11.800 6.500 14 6.500C16.300 6.500 18 7.900 18 9.900C18 12.800 14.100 12.800 14.100 16.200" fill="none" stroke="#2c3240" stroke-width="2.2" stroke-linecap="round"/>
<circle cx="14.100" cy="20.600" r="1.700" fill="#2c3240"/></svg>
<span class="t" style="left:750.3px;top:769.0px;font-size:26px;color:#2c3240;-webkit-text-stroke:0.42px"><i style="display:inline-block;font-style:normal;width:51.4px;letter-spacing:0.8px">Jun </i><i style="display:inline-block;font-style:normal;width:42.2px;letter-spacing:-0.5px">01, </i><i style="display:inline-block;font-style:normal;width:70.8px;letter-spacing:1.55px">2022 </i><i style="display:inline-block;font-style:normal;width:18.6px;letter-spacing:0px">- </i><i style="display:inline-block;font-style:normal;width:52.6px;letter-spacing:0.8px">Jun </i><i style="display:inline-block;font-style:normal;width:46.4px;letter-spacing:1.3px">30, </i><i style="display:inline-block;font-style:normal;width:64px;letter-spacing:1.55px">2022</i></span>
<svg style="position:absolute;left:1804.5px;top:742.5px" width="32.0" height="32.0" viewBox="0 0 32 32" ><g fill="none" stroke="#2c3240" stroke-width="2.300" stroke-linecap="butt" stroke-linejoin="round">
<path d="M17.500 4.300H6.300A4 4 0 0 0 2.300 8.300V26.700A4 4 0 0 0 6.300 30.700H24.700A4 4 0 0 0 28.700 26.700V16"/>
<circle cx="8.700" cy="11" r="2.200"/><path d="M6 24.800H26"/><path d="M21 12.500L31 2.500M21.500 2.300H31.200V12"/></g></svg>
<div class="hl" style="left:650.0px;top:824.0px;width:1224.0px"></div>
<div class="pill" style="position:absolute;left:1664.4px;top:806.3px;width:185.4px;height:35.3px;"></div>
<svg style="position:absolute;left:1680.0px;top:812.0px" width="24.0" height="24.0" viewBox="0 0 24 24" ><rect x="1.2" y="1.2" width="21.600" height="21.600" rx="4.500" fill="none" stroke="#2c3240" stroke-width="2.300"/>
<circle cx="5.800" cy="6.200" r="1.700" fill="#2c3240"/><path d="M10.300 6.500H19.500M4.200 18.800H19.800" stroke="#2c3240" stroke-width="2.200" fill="none"/></svg>
<span class="t" style="left:1713.9px;top:814.1px;font-size:20px;color:#2c3240;font-weight:700;letter-spacing:-0.34px;">POST LEVEL</span>
<span class="t" style="left:1599.0px;top:907.7px;font-size:22px;color:#6b7885;-webkit-text-stroke:0;">Number of content pieces</span>
<svg style="position:absolute;left:0;top:0" width="3198" height="1828" viewBox="0 0 3198 1828"><path d="M903.30 954.70A219.8 219.8 0 0 1 1111.44 1245.15L1006.99 1209.70A109.5 109.5 0 0 0 903.30 1065.00Z" fill="#6eaae6"/><path d="M1111.44 1245.15A219.8 219.8 0 0 1 917.68 1393.83L910.46 1283.77A109.5 109.5 0 0 0 1006.99 1209.70Z" fill="#3678e8"/><path d="M917.68 1393.83A219.8 219.8 0 0 1 720.54 1296.61L812.25 1235.33A109.5 109.5 0 0 0 910.46 1283.77Z" fill="#c74473"/><path d="M720.54 1296.61A219.8 219.8 0 0 1 695.16 1103.85L799.61 1139.30A109.5 109.5 0 0 0 812.25 1235.33Z" fill="#3776ae"/><path d="M695.16 1103.85A219.8 219.8 0 0 1 806.08 977.37L854.87 1076.29A109.5 109.5 0 0 0 799.61 1139.30Z" fill="#000000"/><path d="M806.08 977.37A219.8 219.8 0 0 1 860.42 958.92L881.94 1067.10A109.5 109.5 0 0 0 854.87 1076.29Z" fill="#ab282c"/><path d="M860.42 958.92A219.8 219.8 0 0 1 903.30 954.70L903.30 1065.00A109.5 109.5 0 0 0 881.94 1067.10Z" fill="#bb3330"/></svg>
<div style="position:absolute;left:1157.8px;top:977.8px;width:32px;height:32px;border-radius:50%;background:#6eaae6;"></div>
<div style="position:absolute;left:1169.3px;top:989.3px;width:9px;height:9px;border-radius:50%;background:#fff;"></div>
<span class="t" style="left:1211.0px;top:981.0px;font-size:26px;color:#2c3240;-webkit-text-stroke:0.42px;letter-spacing:1.35px;">Twitter</span>
<span class="t" style="left:1744.6px;top:981.0px;font-size:26px;color:#2c3240;-webkit-text-stroke:0.42px;letter-spacing:0.02px;">(30.21%)</span>
<span class="t" style="left:1706.1px;top:981.0px;font-size:26px;color:#2c3240;font-weight:700;letter-spacing:-0.96px;">29</span>
<div style="position:absolute;left:1157.8px;top:1047.8px;width:32px;height:32px;border-radius:50%;background:#3678e8;"></div>
<div style="position:absolute;left:1169.3px;top:1059.2px;width:9px;height:9px;border-radius:50%;background:#fff;"></div>
<span class="t" style="left:1209.0px;top:1050.9px;font-size:26px;color:#2c3240;-webkit-text-stroke:0.42px;letter-spacing:0.95px;">Facebook</span>
<span class="t" style="left:1744.6px;top:1050.9px;font-size:26px;color:#2c3240;-webkit-text-stroke:0.42px;letter-spacing:0.02px;">(18.75%)</span>
<span class="t" style="left:1705.1px;top:1050.9px;font-size:26px;color:#2c3240;font-weight:700;letter-spacing:0.04px;">18</span>
<div style="position:absolute;left:1157.8px;top:1117.7px;width:32px;height:32px;border-radius:50%;background:#c74473;"></div>
<div style="position:absolute;left:1169.3px;top:1129.2px;width:9px;height:9px;border-radius:50%;background:#fff;"></div>
<span class="t" style="left:1209.0px;top:1120.9px;font-size:26px;color:#2c3240;-webkit-text-stroke:0.42px;letter-spacing:1.69px;">Instagram</span>
<span class="t" style="left:1744.6px;top:1120.9px;font-size:26px;color:#2c3240;-webkit-text-stroke:0.42px;letter-spacing:0.02px;">(16.67%)</span>
<span class="t" style="left:1705.1px;top:1120.9px;font-size:26px;color:#2c3240;font-weight:700;letter-spacing:0.04px;">16</span>
<div style="position:absolute;left:1157.8px;top:1187.7px;width:32px;height:32px;border-radius:50%;background:#3776ae;"></div>
<div style="position:absolute;left:1169.3px;top:1199.2px;width:9px;height:9px;border-radius:50%;background:#fff;"></div>
<span class="t" style="left:1209.0px;top:1190.8px;font-size:26px;color:#2c3240;-webkit-text-stroke:0.42px;letter-spacing:1.62px;">LinkedIn</span>
<span class="t" style="left:1744.6px;top:1190.8px;font-size:26px;color:#2c3240;-webkit-text-stroke:0.42px;letter-spacing:0.02px;">(14.58%)</span>
<span class="t" style="left:1705.1px;top:1190.8px;font-size:26px;color:#2c3240;font-weight:700;letter-spacing:-0.96px;">14</span>
<div style="position:absolute;left:1157.8px;top:1257.6px;width:32px;height:32px;border-radius:50%;background:#000000;"></div>
<div style="position:absolute;left:1169.3px;top:1269.1px;width:9px;height:9px;border-radius:50%;background:#fff;"></div>
<span class="t" style="left:1211.0px;top:1260.8px;font-size:26px;color:#2c3240;-webkit-text-stroke:0.42px;letter-spacing:0.73px;">TikTok</span>
<span class="t" style="left:1758.6px;top:1260.8px;font-size:26px;color:#2c3240;-webkit-text-stroke:0.42px;letter-spacing:0.10px;">(12.5%)</span>
<span class="t" style="left:1718.6px;top:1260.8px;font-size:26px;color:#2c3240;font-weight:700;letter-spacing:0.54px;">12</span>
<div style="position:absolute;left:1157.8px;top:1327.5px;width:32px;height:32px;border-radius:50%;background:#ab282c;"></div>
<div style="position:absolute;left:1169.3px;top:1339.0px;width:9px;height:9px;border-radius:50%;background:#fff;"></div>
<span class="t" style="left:1209.0px;top:1330.7px;font-size:26px;color:#2c3240;-webkit-text-stroke:0.42px;letter-spacing:0.87px;">Pinterest</span>
<span class="t" style="left:1758.6px;top:1330.7px;font-size:26px;color:#2c3240;-webkit-text-stroke:0.42px;letter-spacing:0.10px;">(4.17%)</span>
<span class="t" style="left:1732.6px;top:1330.7px;font-size:26px;color:#2c3240;font-weight:700;">4</span>
<div style="position:absolute;left:1157.8px;top:1397.5px;width:32px;height:32px;border-radius:50%;background:#bb3330;"></div>
<div style="position:absolute;left:1169.3px;top:1409.0px;width:9px;height:9px;border-radius:50%;background:#fff;"></div>
<span class="t" style="left:1211.0px;top:1400.7px;font-size:26px;color:#2c3240;-webkit-text-stroke:0.42px;letter-spacing:0.46px;">YouTube</span>
<span class="t" style="left:1758.6px;top:1400.7px;font-size:26px;color:#2c3240;-webkit-text-stroke:0.42px;letter-spacing:0.10px;">(3.13%)</span>
<span class="t" style="left:1733.6px;top:1400.7px;font-size:26px;color:#2c3240;font-weight:700;">3</span>
<div class="hl" style="left:650.0px;top:1524.0px;width:1224.0px"></div>
<span class="t" style="left:672.7px;top:1537.5px;font-size:26px;color:#6c7077;-webkit-text-stroke:0.42px;letter-spacing:0.89px;">Profiles:</span>
<span class="t" style="left:778.7px;top:1537.5px;font-size:26px;color:#2c3240;-webkit-text-stroke:0.42px;letter-spacing:0.51px;">Emplifi, Emplifi, Emplifi, Emplifi</span>
<span class="t" style="left:1163.3px;top:1537.5px;font-size:26px;color:#5ba4e6;-webkit-text-stroke:0.42px;letter-spacing:2.82px;">+3</span>
<svg style="position:absolute;left:1792.3px;top:1541.8px" width="28.0" height="30.0" viewBox="0 0 28 30" ><g fill="none" stroke="#2c3240" stroke-width="2.100">
<path d="M4.800 1V6.500M4.800 14.500V28.500"/><circle cx="4.800" cy="10.500" r="4"/>
<path d="M14 1V17M14 25V28.500"/><circle cx="14" cy="21" r="4"/>
<path d="M22.800 28.500V14C22.800 10 19.500 10 19.500 5.500"/></g></svg>
<div style="position:absolute;left:1816.4px;top:1534.2px;width:32.0px;height:21.6px;background:#fdf0c6;border-radius:11px;"></div>
<span class="t" style="left:1826.4px;top:1536.4px;font-size:18px;color:#2c3240;font-weight:700;">1</span>
<div class="card" style="position:absolute;left:1900.0px;top:700.0px;width:1228.0px;height:887.6px;"></div>
<svg style="position:absolute;left:1930.0px;top:742.0px" width="44.0" height="44.0" viewBox="0 0 44 44" ><g fill="none" stroke-width="2">
<path d="M22 3H7A4 4 0 0 0 3 7V22" stroke="#5ba4e6"/><path d="M30 11H18A7 7 0 0 0 11 18V30" stroke="#c0305f"/>
<circle cx="30" cy="30" r="10.800" stroke="#2b6be8"/></g></svg>
<span class="t" style="left:2000.6px;top:728.1px;font-size:32.2px;color:#2c3240;-webkit-text-stroke:0.52px;letter-spacing:0.90px;">Evolution of Posts &amp; Stories</span>
<svg style="position:absolute;left:2432.2px;top:726.3px" width="27.6" height="27.6" viewBox="0 0 28 28" ><rect x="1.2" y="1.2" width="25.6" height="25.6" rx="4.5" fill="none" stroke="#2c3240" stroke-width="2.4"/>
<path d="M10 10.200C10 7.800 11.800 6.500 14 6.500C16.300 6.500 18 7.900 18 9.900C18 12.800 14.100 12.800 14.100 16.200" fill="none" stroke="#2c3240" stroke-width="2.2" stroke-linecap="round"/>
<circle cx="14.100" cy="20.600" r="1.700" fill="#2c3240"/></svg>
<span class="t" style="left:2002.4px;top:769.0px;font-size:26px;color:#2c3240;-webkit-text-stroke:0.42px"><i style="display:inline-block;font-style:normal;width:51.4px;letter-spacing:0.8px">Jun </i><i style="display:inline-block;font-style:normal;width:42.2px;letter-spacing:-0.5px">01, </i><i style="display:inline-block;font-style:normal;width:70.8px;letter-spacing:1.55px">2022 </i><i style="display:inline-block;font-style:normal;width:18.6px;letter-spacing:0px">- </i><i style="display:inline-block;font-style:normal;width:52.6px;letter-spacing:0.8px">Jun </i><i style="display:inline-block;font-style:normal;width:46.4px;letter-spacing:1.3px">30, </i><i style="display:inline-block;font-style:normal;width:64px;letter-spacing:1.55px">2022</i></span>
<span class="t" style="left:2382.4px;top:773.7px;font-size:22.5px;color:#6c7077;-webkit-text-stroke:0.36px;letter-spacing:0.35px;">Aggregated by</span>
<span class="t" style="left:2541.0px;top:773.7px;font-size:22.5px;color:#6c7077;font-weight:700;letter-spacing:0.02px;">Day</span>
<div style="position:absolute;left:2542px;top:798px;width:41px;height:0;border-top:2px dashed #b9cbe6;"></div>
<svg style="position:absolute;left:3056.5px;top:745.5px" width="32.0" height="32.0" viewBox="0 0 32 32" ><g fill="none" stroke="#2c3240" stroke-width="2.300" stroke-linecap="butt" stroke-linejoin="round">
<path d="M17.500 4.300H6.300A4 4 0 0 0 2.300 8.300V26.700A4 4 0 0 0 6.300 30.700H24.700A4 4 0 0 0 28.700 26.700V16"/>
<circle cx="8.700" cy="11" r="2.200"/><path d="M6 24.800H26"/><path d="M21 12.500L31 2.500M21.500 2.300H31.200V12"/></g></svg>
<div class="hl" style="left:1902.0px;top:829.6px;width:1224.0px"></div>
<div class="pill" style="position:absolute;left:2917.0px;top:812.6px;width:184.8px;height:35.0px;"></div>
<svg style="position:absolute;left:2932.5px;top:818.3px" width="24.0" height="24.0" viewBox="0 0 24 24" ><rect x="1.2" y="1.2" width="21.600" height="21.600" rx="4.500" fill="none" stroke="#2c3240" stroke-width="2.300"/>
<circle cx="5.800" cy="6.200" r="1.700" fill="#2c3240"/><path d="M10.300 6.500H19.500M4.200 18.800H19.800" stroke="#2c3240" stroke-width="2.200" fill="none"/></svg>
<span class="t" style="left:2966.3px;top:820.4px;font-size:20px;color:#2c3240;font-weight:700;letter-spacing:-0.34px;">POST LEVEL</span>
<svg style="position:absolute;left:0;top:0" width="3198" height="1828" viewBox="0 0 3198 1828"><path d="M2069 1209.1H3091" stroke="#a9b6ba" stroke-width="2" stroke-dasharray="2 6" fill="none"/><path d="M2069 1094.7H3091" stroke="#a9b6ba" stroke-width="2" stroke-dasharray="2 6" fill="none"/><path d="M2069 980.3H3091" stroke="#a9b6ba" stroke-width="2" stroke-dasharray="2 6" fill="none"/><path d="M2069 865.9H3091" stroke="#a9b6ba" stroke-width="2" stroke-dasharray="2 6" fill="none"/><rect x="2073.6" y="1151.9" width="25.8" height="171.6" fill="#6eaae6"/><rect x="2073.6" y="1094.7" width="25.8" height="57.2" fill="#3678e8"/><rect x="2073.6" y="1037.5" width="25.8" height="57.2" fill="#c74473"/><rect x="2073.6" y="980.3" width="25.8" height="57.2" fill="#000000"/><rect x="2107.6" y="1266.3" width="25.8" height="57.2" fill="#6eaae6"/><rect x="2107.6" y="1209.1" width="25.8" height="57.2" fill="#3678e8"/><rect x="2107.6" y="1151.9" width="25.8" height="57.2" fill="#c74473"/><rect x="2107.6" y="1094.7" width="25.8" height="57.2" fill="#000000"/><rect x="2141.7" y="1266.3" width="25.8" height="57.2" fill="#000000"/><rect x="2243.8" y="1209.1" width="25.8" height="114.4" fill="#6eaae6"/><rect x="2243.8" y="1151.9" width="25.8" height="57.2" fill="#3678e8"/><rect x="2243.8" y="1094.7" width="25.8" height="57.2" fill="#c74473"/><rect x="2243.8" y="1037.5" width="25.8" height="57.2" fill="#000000"/><rect x="2277.8" y="1266.3" width="25.8" height="57.2" fill="#6eaae6"/><rect x="2277.8" y="1209.1" width="25.8" height="57.2" fill="#3678e8"/><rect x="2277.8" y="1151.9" width="25.8" height="57.2" fill="#c74473"/><rect x="2277.8" y="1037.5" width="25.8" height="114.4" fill="#000000"/><rect x="2277.8" y="980.3" width="25.8" height="57.2" fill="#ab282c"/><rect x="2277.8" y="923.1" width="25.8" height="57.2" fill="#bb3330"/><rect x="2311.8" y="1266.3" width="25.8" height="57.2" fill="#6eaae6"/><rect x="2311.8" y="1209.1" width="25.8" height="57.2" fill="#3678e8"/><rect x="2311.8" y="1151.9" width="25.8" height="57.2" fill="#c74473"/><rect x="2311.8" y="1094.7" width="25.8" height="57.2" fill="#3776ae"/><rect x="2311.8" y="1037.5" width="25.8" height="57.2" fill="#000000"/><rect x="2311.8" y="980.3" width="25.8" height="57.2" fill="#ab282c"/><rect x="2345.8" y="1209.1" width="25.8" height="114.4" fill="#6eaae6"/><rect x="2345.8" y="1151.9" width="25.8" height="57.2" fill="#3678e8"/><rect x="2345.8" y="1094.7" width="25.8" height="57.2" fill="#3776ae"/><rect x="2345.8" y="1037.5" width="25.8" height="57.2" fill="#000000"/><rect x="2379.9" y="1209.1" width="25.8" height="114.4" fill="#6eaae6"/><rect x="2379.9" y="1151.9" width="25.8" height="57.2" fill="#3678e8"/><rect x="2379.9" y="1037.5" width="25.8" height="114.4" fill="#000000"/><rect x="2413.9" y="1266.3" width="25.8" height="57.2" fill="#3678e8"/><rect x="2413.9" y="1209.1" width="25.8" height="57.2" fill="#3776ae"/><rect x="2482.0" y="1266.3" width="25.8" height="57.2" fill="#6eaae6"/><rect x="2482.0" y="1209.1" width="25.8" height="57.2" fill="#3678e8"/><rect x="2482.0" y="1151.9" width="25.8" height="57.2" fill="#c74473"/><rect x="2482.0" y="1094.7" width="25.8" height="57.2" fill="#3776ae"/><rect x="2482.0" y="1037.5" width="25.8" height="57.2" fill="#000000"/><rect x="2516.0" y="1209.1" width="25.8" height="114.4" fill="#6eaae6"/><rect x="2516.0" y="1151.9" width="25.8" height="57.2" fill="#3678e8"/><rect x="2516.0" y="1094.7" width="25.8" height="57.2" fill="#c74473"/><rect x="2550.0" y="1266.3" width="25.8" height="57.2" fill="#6eaae6"/><rect x="2550.0" y="1209.1" width="25.8" height="57.2" fill="#3678e8"/><rect x="2550.0" y="1151.9" width="25.8" height="57.2" fill="#c74473"/><rect x="2550.0" y="1094.7" width="25.8" height="57.2" fill="#3776ae"/><rect x="2550.0" y="1037.5" width="25.8" height="57.2" fill="#000000"/><rect x="2584.0" y="1266.3" width="25.8" height="57.2" fill="#6eaae6"/><rect x="2584.0" y="1209.1" width="25.8" height="57.2" fill="#3678e8"/><rect x="2584.0" y="1151.9" width="25.8" height="57.2" fill="#c74473"/><rect x="2584.0" y="1094.7" width="25.8" height="57.2" fill="#bb3330"/><rect x="2618.1" y="1266.3" width="25.8" height="57.2" fill="#6eaae6"/><rect x="2618.1" y="1209.1" width="25.8" height="57.2" fill="#3678e8"/><rect x="2618.1" y="1151.9" width="25.8" height="57.2" fill="#3776ae"/><rect x="2652.1" y="1266.3" width="25.8" height="57.2" fill="#ab282c"/><rect x="2720.2" y="1266.3" width="25.8" height="57.2" fill="#6eaae6"/><rect x="2720.2" y="1209.1" width="25.8" height="57.2" fill="#3678e8"/><rect x="2720.2" y="1151.9" width="25.8" height="57.2" fill="#c74473"/><rect x="2720.2" y="1094.7" width="25.8" height="57.2" fill="#3776ae"/><rect x="2754.2" y="1209.1" width="25.8" height="114.4" fill="#6eaae6"/><rect x="2754.2" y="1151.9" width="25.8" height="57.2" fill="#c74473"/><rect x="2754.2" y="980.3" width="25.8" height="171.6" fill="#3776ae"/><rect x="2788.2" y="1266.3" width="25.8" height="57.2" fill="#6eaae6"/><rect x="2788.2" y="1209.1" width="25.8" height="57.2" fill="#3678e8"/><rect x="2788.2" y="1151.9" width="25.8" height="57.2" fill="#c74473"/><rect x="2788.2" y="1094.7" width="25.8" height="57.2" fill="#bb3330"/><rect x="2822.3" y="1209.1" width="25.8" height="114.4" fill="#6eaae6"/><rect x="2822.3" y="1151.9" width="25.8" height="57.2" fill="#3678e8"/><rect x="2822.3" y="1094.7" width="25.8" height="57.2" fill="#c74473"/><rect x="2822.3" y="1037.5" width="25.8" height="57.2" fill="#ab282c"/><rect x="2856.3" y="1266.3" width="25.8" height="57.2" fill="#6eaae6"/><rect x="2890.3" y="1266.3" width="25.8" height="57.2" fill="#3776ae"/><rect x="2924.3" y="1266.3" width="25.8" height="57.2" fill="#3776ae"/><rect x="2958.4" y="1266.3" width="25.8" height="57.2" fill="#6eaae6"/><rect x="2958.4" y="1209.1" width="25.8" height="57.2" fill="#c74473"/><rect x="2992.4" y="1266.3" width="25.8" height="57.2" fill="#6eaae6"/><rect x="2992.4" y="1209.1" width="25.8" height="57.2" fill="#3678e8"/><rect x="2992.4" y="1151.9" width="25.8" height="57.2" fill="#3776ae"/><rect x="3026.4" y="1266.3" width="25.8" height="57.2" fill="#6eaae6"/><rect x="3026.4" y="1209.1" width="25.8" height="57.2" fill="#c74473"/><rect x="3060.5" y="1266.3" width="25.8" height="57.2" fill="#6eaae6"/><rect x="3060.5" y="1209.1" width="25.8" height="57.2" fill="#3678e8"/><rect x="3060.5" y="1151.9" width="25.8" height="57.2" fill="#c74473"/><rect x="3060.5" y="1094.7" width="25.8" height="57.2" fill="#3776ae"/><path d="M2069 1323.5H3091" stroke="#6a6f85" stroke-width="2" fill="none"/><path d="M2087.3 1323.5V1335.5" stroke="#6a6f85" stroke-width="2" fill="none"/><path d="M2223.4 1323.5V1335.5" stroke="#6a6f85" stroke-width="2" fill="none"/><path d="M2359.5 1323.5V1335.5" stroke="#6a6f85" stroke-width="2" fill="none"/><path d="M2495.7 1323.5V1335.5" stroke="#6a6f85" stroke-width="2" fill="none"/><path d="M2631.8 1323.5V1335.5" stroke="#6a6f85" stroke-width="2" fill="none"/><path d="M2767.9 1323.5V1335.5" stroke="#6a6f85" stroke-width="2" fill="none"/><path d="M2904.0 1323.5V1335.5" stroke="#6a6f85" stroke-width="2" fill="none"/><path d="M3074.2 1323.5V1335.5" stroke="#6a6f85" stroke-width="2" fill="none"/></svg>
<span class="t" style="left:2053.3px;top:1345.2px;font-size:21px;color:#3d4450;-webkit-text-stroke:0.34px;letter-spacing:1.13px;">Jun 01</span>
<span class="t" style="left:2189.4px;top:1345.2px;font-size:21px;color:#3d4450;-webkit-text-stroke:0.34px;letter-spacing:1.13px;">Jun 05</span>
<span class="t" style="left:2325.5px;top:1345.2px;font-size:21px;color:#3d4450;-webkit-text-stroke:0.34px;letter-spacing:1.13px;">Jun 09</span>
<span class="t" style="left:2461.7px;top:1345.2px;font-size:21px;color:#3d4450;-webkit-text-stroke:0.34px;letter-spacing:1.13px;">Jun 13</span>
<span class="t" style="left:2597.8px;top:1345.2px;font-size:21px;color:#3d4450;-webkit-text-stroke:0.34px;letter-spacing:1.13px;">Jun 17</span>
<span class="t" style="left:2733.9px;top:1345.2px;font-size:21px;color:#3d4450;-webkit-text-stroke:0.34px;letter-spacing:1.13px;">Jun 21</span>
<span class="t" style="left:2870.0px;top:1345.2px;font-size:21px;color:#3d4450;-webkit-text-stroke:0.34px;letter-spacing:1.13px;">Jun 25</span>
<span class="t" style="left:3016.2px;top:1345.2px;font-size:21px;color:#3d4450;-webkit-text-stroke:0.34px;letter-spacing:1.13px;">Jun 30</span>
<span class="t" style="left:2034.5px;top:1313.3px;font-size:21px;color:#3d4450;-webkit-text-stroke:0.34px;">0</span>
<span class="t" style="left:2034.5px;top:1198.9px;font-size:21px;color:#3d4450;-webkit-text-stroke:0.34px;">2</span>
<span class="t" style="left:2033.5px;top:1084.5px;font-size:21px;color:#3d4450;-webkit-text-stroke:0.34px;">4</span>
<span class="t" style="left:2034.5px;top:970.1px;font-size:21px;color:#3d4450;-webkit-text-stroke:0.34px;">6</span>
<span class="t" style="left:2034.5px;top:868.2px;font-size:21px;color:#3d4450;-webkit-text-stroke:0.34px;">8</span>
<div style="position:absolute;left:1944px;top:1131px;width:0;height:0;"><span class="t" id="yt1" style="left:-134px;top:-11px;font-size:22.5px;color:#111;letter-spacing:0.52px;-webkit-text-stroke:0.3px;transform:rotate(-90deg);transform-origin:134px 11px;width:268px;text-align:center;">Number of content pieces</span></div>
<div style="position:absolute;left:1936.0px;top:1394.0px;width:11.8px;height:47.7px;background:#6eaae6;border-radius:4px;"></div>
<span class="t" style="left:1964.6px;top:1404.7px;font-size:26px;color:#2c3240;-webkit-text-stroke:0.42px;letter-spacing:1.35px;">Twitter</span>
<div style="position:absolute;left:2225.1px;top:1394.0px;width:11.8px;height:47.7px;background:#3678e8;border-radius:4px;"></div>
<span class="t" style="left:2251.7px;top:1404.7px;font-size:26px;color:#2c3240;-webkit-text-stroke:0.42px;letter-spacing:0.95px;">Facebook</span>
<div style="position:absolute;left:2514.2px;top:1394.0px;width:11.8px;height:47.7px;background:#c74473;border-radius:4px;"></div>
<span class="t" style="left:2540.8px;top:1404.7px;font-size:26px;color:#2c3240;-webkit-text-stroke:0.42px;letter-spacing:1.69px;">Instagram</span>
<div style="position:absolute;left:2803.3px;top:1394.0px;width:11.8px;height:47.7px;background:#3776ae;border-radius:4px;"></div>
<span class="t" style="left:2829.9px;top:1404.7px;font-size:26px;color:#2c3240;-webkit-text-stroke:0.42px;letter-spacing:1.62px;">LinkedIn</span>
<div style="position:absolute;left:1936.0px;top:1452.1px;width:11.8px;height:47.7px;background:#000000;border-radius:4px;"></div>
<span class="t" style="left:1964.6px;top:1462.8px;font-size:26px;color:#2c3240;-webkit-text-stroke:0.42px;letter-spacing:0.73px;">TikTok</span>
<div style="position:absolute;left:2225.1px;top:1452.1px;width:11.8px;height:47.7px;background:#ab282c;border-radius:4px;"></div>
<span class="t" style="left:2251.7px;top:1462.8px;font-size:26px;color:#2c3240;-webkit-text-stroke:0.42px;letter-spacing:0.87px;">Pinterest</span>
<div style="position:absolute;left:2514.2px;top:1452.1px;width:11.8px;height:47.7px;background:#bb3330;border-radius:4px;"></div>
<span class="t" style="left:2542.8px;top:1462.8px;font-size:26px;color:#2c3240;-webkit-text-stroke:0.42px;letter-spacing:0.46px;">YouTube</span>
<div class="hl" style="left:1902.0px;top:1524.0px;width:1224.0px"></div>
<span class="t" style="left:1924.7px;top:1537.7px;font-size:26px;color:#6c7077;-webkit-text-stroke:0.42px;letter-spacing:0.89px;">Profiles:</span>
<span class="t" style="left:2030.7px;top:1537.7px;font-size:26px;color:#2c3240;-webkit-text-stroke:0.42px;letter-spacing:0.51px;">Emplifi, Emplifi, Emplifi, Emplifi</span>
<span class="t" style="left:2415.3px;top:1537.7px;font-size:26px;color:#5ba4e6;-webkit-text-stroke:0.42px;letter-spacing:2.82px;">+3</span>
<svg style="position:absolute;left:3044.0px;top:1541.6px" width="28.0" height="30.0" viewBox="0 0 28 30" ><g fill="none" stroke="#2c3240" stroke-width="2.100">
<path d="M4.800 1V6.500M4.800 14.500V28.500"/><circle cx="4.800" cy="10.500" r="4"/>
<path d="M14 1V17M14 25V28.500"/><circle cx="14" cy="21" r="4"/>
<path d="M22.800 28.500V14C22.800 10 19.500 10 19.500 5.500"/></g></svg>
<div style="position:absolute;left:3068.0px;top:1533.8px;width:32.0px;height:21.6px;background:#fdf0c6;border-radius:11px;"></div>
<span class="t" style="left:3078.0px;top:1536.0px;font-size:18px;color:#2c3240;font-weight:700;">1</span>
<div class="card" style="position:absolute;left:648.0px;top:1612.0px;width:1228.0px;height:300.0px;"></div>
<svg style="position:absolute;left:678.0px;top:1654.0px" width="44.0" height="44.0" viewBox="0 0 44 44" ><g fill="none" stroke-width="2">
<path d="M22 3H7A4 4 0 0 0 3 7V22" stroke="#5ba4e6"/><path d="M30 11H18A7 7 0 0 0 11 18V30" stroke="#c0305f"/>
<circle cx="30" cy="30" r="10.800" stroke="#2b6be8"/></g></svg>
<span class="t" style="left:749.8px;top:1640.7px;font-size:32.2px;color:#2c3240;-webkit-text-stroke:0.52px;letter-spacing:1.33px;">Content Impressions by Platform</span>
<svg style="position:absolute;left:1266.6px;top:1638.3px" width="27.6" height="27.6" viewBox="0 0 28 28" ><rect x="1.2" y="1.2" width="25.6" height="25.6" rx="4.5" fill="none" stroke="#2c3240" stroke-width="2.4"/>
<path d="M10 10.200C10 7.800 11.800 6.500 14 6.500C16.300 6.500 18 7.900 18 9.900C18 12.800 14.100 12.800 14.100 16.200" fill="none" stroke="#2c3240" stroke-width="2.2" stroke-linecap="round"/>
<circle cx="14.100" cy="20.600" r="1.700" fill="#2c3240"/></svg>
<span class="t" style="left:750.6px;top:1681.6px;font-size:26px;color:#2c3240;-webkit-text-stroke:0.42px"><i style="display:inline-block;font-style:normal;width:51.4px;letter-spacing:0.8px">Jun </i><i style="display:inline-block;font-style:normal;width:42.2px;letter-spacing:-0.5px">01, </i><i style="display:inline-block;font-style:normal;width:70.8px;letter-spacing:1.55px">2022 </i><i style="display:inline-block;font-style:normal;width:18.6px;letter-spacing:0px">- </i><i style="display:inline-block;font-style:normal;width:52.6px;letter-spacing:0.8px">Jun </i><i style="display:inline-block;font-style:normal;width:46.4px;letter-spacing:1.3px">30, </i><i style="display:inline-block;font-style:normal;width:64px;letter-spacing:1.55px">2022</i></span>
<svg style="position:absolute;left:1804.5px;top:1654.5px" width="32.0" height="32.0" viewBox="0 0 32 32" ><g fill="none" stroke="#2c3240" stroke-width="2.300" stroke-linecap="butt" stroke-linejoin="round">
<path d="M17.500 4.300H6.300A4 4 0 0 0 2.300 8.300V26.700A4 4 0 0 0 6.300 30.700H24.700A4 4 0 0 0 28.700 26.700V16"/>
<circle cx="8.700" cy="11" r="2.200"/><path d="M6 24.800H26"/><path d="M21 12.500L31 2.500M21.500 2.300H31.200V12"/></g></svg>
<div class="hl" style="left:650.0px;top:1736.3px;width:1224.0px"></div>
<div class="pill" style="position:absolute;left:1664.4px;top:1719.0px;width:185.4px;height:35.0px;"></div>
<svg style="position:absolute;left:1680.0px;top:1724.7px" width="24.0" height="24.0" viewBox="0 0 24 24" ><rect x="1.2" y="1.2" width="21.600" height="21.600" rx="4.500" fill="none" stroke="#2c3240" stroke-width="2.300"/>
<circle cx="5.800" cy="6.200" r="1.700" fill="#2c3240"/><path d="M10.300 6.500H19.500M4.200 18.800H19.800" stroke="#2c3240" stroke-width="2.200" fill="none"/></svg>
<span class="t" style="left:1713.9px;top:1726.8px;font-size:20px;color:#2c3240;font-weight:700;letter-spacing:-0.34px;">POST LEVEL</span>
<div class="card" style="position:absolute;left:1900.0px;top:1612.0px;width:1228.0px;height:300.0px;"></div>
<svg style="position:absolute;left:1930.0px;top:1654.0px" width="44.0" height="44.0" viewBox="0 0 44 44" ><g fill="none" stroke-width="2">
<path d="M22 3H7A4 4 0 0 0 3 7V22" stroke="#5ba4e6"/><path d="M30 11H18A7 7 0 0 0 11 18V30" stroke="#c0305f"/>
<circle cx="30" cy="30" r="10.800" stroke="#2b6be8"/></g></svg>
<span class="t" style="left:2000.6px;top:1640.2px;font-size:32.2px;color:#2c3240;-webkit-text-stroke:0.52px;letter-spacing:1.03px;">Evolution of Engagements</span>
<svg style="position:absolute;left:2411.8px;top:1638.3px" width="27.6" height="27.6" viewBox="0 0 28 28" ><rect x="1.2" y="1.2" width="25.6" height="25.6" rx="4.5" fill="none" stroke="#2c3240" stroke-width="2.4"/>
<path d="M10 10.200C10 7.800 11.800 6.500 14 6.500C16.300 6.500 18 7.900 18 9.900C18 12.800 14.100 12.800 14.100 16.200" fill="none" stroke="#2c3240" stroke-width="2.2" stroke-linecap="round"/>
<circle cx="14.100" cy="20.600" r="1.700" fill="#2c3240"/></svg>
<span class="t" style="left:2002.4px;top:1681.6px;font-size:26px;color:#2c3240;-webkit-text-stroke:0.42px"><i style="display:inline-block;font-style:normal;width:51.4px;letter-spacing:0.8px">Jun </i><i style="display:inline-block;font-style:normal;width:42.2px;letter-spacing:-0.5px">01, </i><i style="display:inline-block;font-style:normal;width:70.8px;letter-spacing:1.55px">2022 </i><i style="display:inline-block;font-style:normal;width:18.6px;letter-spacing:0px">- </i><i style="display:inline-block;font-style:normal;width:52.6px;letter-spacing:0.8px">Jun </i><i style="display:inline-block;font-style:normal;width:46.4px;letter-spacing:1.3px">30, </i><i style="display:inline-block;font-style:normal;width:64px;letter-spacing:1.55px">2022</i></span>
<span class="t" style="left:2382.4px;top:1686.2px;font-size:22.5px;color:#6c7077;-webkit-text-stroke:0.36px;letter-spacing:0.35px;">Aggregated by</span>
<span class="t" style="left:2541.0px;top:1686.2px;font-size:22.5px;color:#6c7077;font-weight:700;letter-spacing:0.02px;">Day</span>
<div style="position:absolute;left:2542px;top:1710.500px;width:41px;height:0;border-top:2px dashed #b9cbe6;"></div>
<svg style="position:absolute;left:3056.5px;top:1658.0px" width="32.0" height="32.0" viewBox="0 0 32 32" ><g fill="none" stroke="#2c3240" stroke-width="2.300" stroke-linecap="butt" stroke-linejoin="round">
<path d="M17.500 4.300H6.300A4 4 0 0 0 2.300 8.300V26.700A4 4 0 0 0 6.300 30.700H24.700A4 4 0 0 0 28.700 26.700V16"/>
<circle cx="8.700" cy="11" r="2.200"/><path d="M6 24.800H26"/><path d="M21 12.500L31 2.500M21.500 2.300H31.200V12"/></g></svg>
<div class="hl" style="left:1902.0px;top:1742.0px;width:1224.0px"></div>
<div class="pill" style="position:absolute;left:2917.0px;top:1725.0px;width:184.8px;height:35.0px;"></div>
<svg style="position:absolute;left:2932.5px;top:1730.7px" width="24.0" height="24.0" viewBox="0 0 24 24" ><rect x="1.2" y="1.2" width="21.600" height="21.600" rx="4.500" fill="none" stroke="#2c3240" stroke-width="2.300"/>
<circle cx="5.800" cy="6.200" r="1.700" fill="#2c3240"/><path d="M10.300 6.500H19.500M4.200 18.800H19.800" stroke="#2c3240" stroke-width="2.200" fill="none"/></svg>
<span class="t" style="left:2966.3px;top:1732.8px;font-size:20px;color:#2c3240;font-weight:700;letter-spacing:-0.34px;">POST LEVEL</span>
<svg style="position:absolute;left:2060px;top:1770px" width="1040" height="14" viewBox="0 0 1040 14"><path d="M9 8H1031" stroke="#a9b6ba" stroke-width="2" stroke-dasharray="2 6" fill="none"/></svg>
<span class="t" style="left:2004.6px;top:1779.4px;font-size:22px;color:#3d4450;-webkit-text-stroke:0.35px;letter-spacing:1.96px;">600</span>
<div style="position:absolute;left:3037.700px;top:1668px;width:120px;height:120px;border-radius:50%;background:#0b3fd9;box-shadow:0 4px 24px rgba(0,0,0,.22);"></div>
<svg style="position:absolute;left:3068.0px;top:1694.0px" width="60.0" height="68.0" viewBox="0 0 60 68" ><path d="M8 2H50A6 6 0 0 1 56 8V66L42 59H8A6 6 0 0 1 2 53V8A6 6 0 0 1 8 2Z" fill="#fff"/>
<path d="M10 42Q29 56 48 42" fill="none" stroke="#0b3fd9" stroke-width="3.600" stroke-linecap="round"/></svg>
<svg style="position:absolute;left:3177px;top:1806px" width="21" height="22" viewBox="0 0 21 22"><path d="M21 0V22H0A21 22 0 0 0 21 0Z" fill="#111"/></svg>
</body></html>
